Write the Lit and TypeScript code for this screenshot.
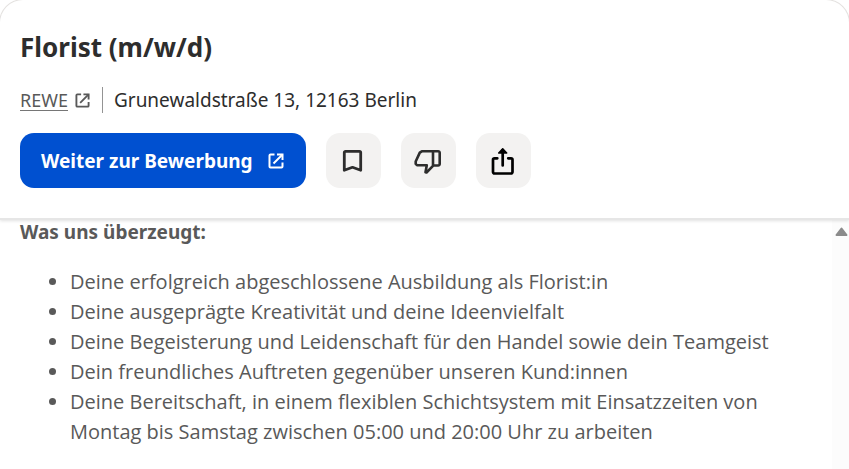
import { LitElement, html, css, svg } from "lit";
import { customElement } from "lit/decorators.js";

const externalIcon = svg`
  <path d="M7.5 2.5H3.5a1 1 0 0 0-1 1v11a1 1 0 0 0 1 1h11a1 1 0 0 0 1-1V10.500" />
  <path d="M10 2.500H15.500V8" />
  <path d="M15.500 2.500L6.500 11.500" />
`;

const requirements = [
  "Deine erfolgreich abgeschlossene Ausbildung als Florist:in",
  "Deine ausgeprägte Kreativität und deine Ideenvielfalt",
  "Deine Begeisterung und Leidenschaft für den Handel sowie dein Teamgeist",
  "Dein freundliches Auftreten gegenüber unseren Kund:innen",
  "Deine Bereitschaft, in einem flexiblen Schichtsystem mit Einsatzzeiten von Montag bis Samstag zwischen 05:00 und 20:00 Uhr zu arbeiten",
];

@customElement("app-root")
export class AppRoot extends LitElement {
  static styles = css`
    :host {
      display: flex;
      flex-direction: column;
      height: 100vh;
      overflow: hidden;
      background: #fff;
      color: #2d2d2d;
      font-family: "Noto Sans", "Open Sans", sans-serif;
      font-size: 19px;
      line-height: 30px;
    }
    svg {
      display: block;
      fill: none;
      stroke: currentColor;
      stroke-width: 2;
    }
    .header {
      position: relative;
      padding: 27px 20px 30px;
      border-bottom: 2px solid #e6e6e6;
      box-shadow: 0 1px 3px rgba(0, 0, 0, 0.12);
    }
    .corners {
      position: absolute;
      inset: -1px -1px auto;
      height: 24px;
      border: 1px solid #e4e2e0;
      border-bottom: 0;
      border-radius: 24px 24px 0 0;
      pointer-events: none;
    }
    .title {
      margin: 0;
      font-size: 26px;
      line-height: 40px;
      font-weight: 700;
    }
    .meta {
      display: flex;
      align-items: center;
      margin-top: 18px;
    }
    .company {
      display: flex;
      align-items: center;
      gap: 7px;
      min-height: 26px;
      padding-right: 12px;
      border-right: 1px solid #949494;
      font-size: 18px;
      color: #595959;
      text-decoration: none;
    }
    .name {
      line-height: 20px;
      border-bottom: 1px solid #767676;
    }
    .address {
      margin-left: 11px;
    }
    .actions {
      display: flex;
      gap: 20px;
      margin-top: 18px;
    }
    button {
      display: flex;
      align-items: center;
      justify-content: center;
      width: 55px;
      height: 55px;
      padding: 0;
      border: 0;
      border-radius: 14px;
      background: #f3f2f1;
      color: #2d2d2d;
      font: inherit;
      cursor: pointer;
    }
    .apply {
      gap: 14px;
      width: auto;
      padding: 0 21px;
      background: #0050d0;
      color: #fff;
      font-weight: 700;
    }
    .share {
      color: #000;
    }
    .body {
      display: flex;
      flex: 1;
      min-height: 0;
    }
    .description {
      flex: 1;
      padding: 0 60px 0 20px;
      color: #595959;
    }
    .subtitle {
      margin: 0;
      font-size: 19px;
      line-height: 24px;
      font-weight: 700;
    }
    ul {
      margin: 23px 0 0;
      padding-left: 50px;
      font-family: "Open Sans", "Noto Sans", sans-serif;
      font-size: 20px;
    }
    .track {
      flex: none;
      width: 17px;
      box-sizing: border-box;
      padding: 7px 0 0 3px;
      background: #fcfcfc;
    }
    .arrow {
      fill: #8b8b8b;
      stroke: #8b8b8b;
    }
  `;

  render() {
    return html`
      <header class="header">
        <div class="corners"></div>
        <h1 class="title">Florist (m/w/d)</h1>
        <div class="meta">
          <a class="company" href="#rewe">
            <span class="name">REWE</span>
            <svg width="15" height="15" viewBox="1 1 16 16" aria-hidden="true">${externalIcon}</svg>
          </a>
          <span class="address">Grunewaldstraße 13, 12163 Berlin</span>
        </div>
        <div class="actions">
          <button class="apply" type="button">
            <span>Weiter zur Bewerbung</span>
            <svg width="18" height="18" viewBox="0 0 18 18" aria-hidden="true">${externalIcon}</svg>
          </button>
          <button type="button" aria-label="Job speichern">
            <svg width="28" height="28" viewBox="0 0 28 28" stroke-linejoin="round" aria-hidden="true">
              <path stroke-width="2.800" d="M6.500 4.300h14a1.200 1.200 0 0 1 1.200 1.200V23.300L13.500 20.300L5.300 23.300V5.500a1.200 1.200 0 0 1 1.200-1.200z" />
            </svg>
          </button>
          <button type="button" aria-label="Nicht interessiert">
            <svg width="28" height="28" viewBox="0 0 28 28" stroke-linejoin="round" aria-hidden="true">
              <path
                stroke-width="2.600"
                d="M19 4.300H7.800L5.800 5.600L1.700 14.500V16.800L3 18.200H12.800L11.500 25.200L12.500 25.500L19 18.800zM19 4.300h5.200a1.500 1.500 0 0 1 1.500 1.500V17a1.500 1.500 0 0 1-1.500 1.500H19"
              />
            </svg>
          </button>
          <button class="share" type="button" aria-label="Job teilen">
            <svg width="28" height="28" viewBox="0 0 28 28" stroke-linejoin="round" stroke-linecap="round" aria-hidden="true">
              <path stroke-width="2.700" d="M8.300 11.300H5.500a1.500 1.500 0 0 0-1.500 1.500V25a1.500 1.500 0 0 0 1.500 1.500h16.500a1.500 1.500 0 0 0 1.500-1.500V12.800a1.500 1.500 0 0 0-1.500-1.500H19.200M13.700 18.500V3" />
              <path stroke-width="1.500" fill="currentColor" d="M13.700 1.800L9.700 6h8z" />
            </svg>
          </button>
        </div>
      </header>
      <main class="body">
        <section class="description">
          <h2 class="subtitle">Was uns überzeugt:</h2>
          <ul>
            ${requirements.map((text) => html`<li>${text}</li>`)}
          </ul>
        </section>
        <div class="track" aria-hidden="true">
          <svg width="13" height="10" viewBox="0 0 13 10">
            <path class="arrow" stroke-linejoin="round" d="M6.500 1.500L11.500 8H1.500z" />
          </svg>
        </div>
      </main>
    `;
  }
}
